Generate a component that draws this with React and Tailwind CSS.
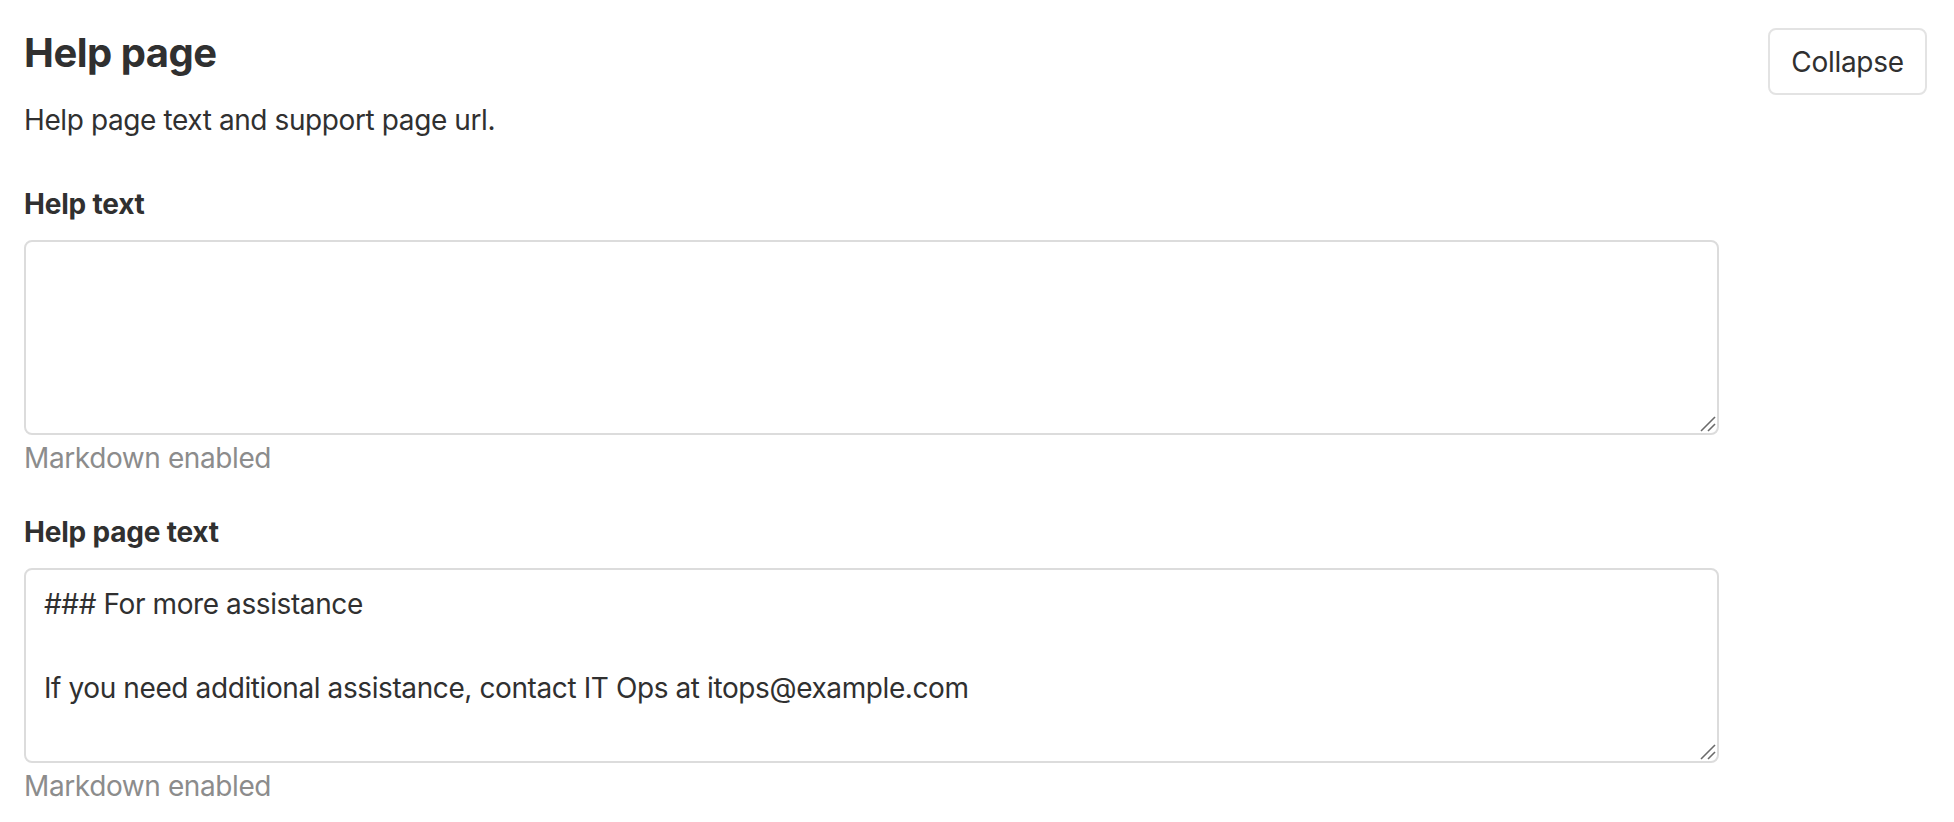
import React from 'react';

const helpPageText = `### For more assistance

If you need additional assistance, contact IT Ops at itops@example.com`;

const Grip = () => (
    <svg className="absolute right-[3px] bottom-[3px] pointer-events-none" width="16" height="16" viewBox="0 0 16 16">
        <line x1="1" y1="15" x2="15" y2="1" stroke="#6b6b6b" strokeWidth="1.6" />
        <line x1="8" y1="15" x2="15" y2="8" stroke="#6b6b6b" strokeWidth="1.6" />
    </svg>
);

const Field = ({ label, value, topGap }) => (
    <div className={topGap}>
        <label className="block text-[28px] leading-[42px] font-bold text-[#303030] tracking-[-0.2px]">{label}</label>
        <div className="relative mt-[15px]">
            <textarea
                defaultValue={value}
                className="block w-full h-[195px] border-2 border-[#dcdcdc] rounded-[8px] px-[18px] pt-[13px] pb-[8px] text-[28px] leading-[42px] tracking-[-0.4px] text-[#303030] bg-white resize-none focus:outline-none"
                style={{ fontFamily: 'inherit' }}
            />
            <Grip />
        </div>
        <p className="mt-[2px] text-[28px] leading-[42px] tracking-[-0.4px] text-[#8c8c8c]">Markdown enabled</p>
    </div>
);

const App = () => {
    return (
        <div
            className="min-h-screen bg-white flex items-start pl-[24px] pr-[27px]"
            style={{ fontFamily: 'Inter, "Noto Sans", sans-serif' }}
        >
            <div className="flex-1 pt-[29px]">
                <h4 className="text-[40px] leading-[48px] font-bold text-[#303030] tracking-[-0.5px]">Help page</h4>
                <p className="mt-[22px] text-[28px] leading-[42px] tracking-[-0.4px] text-[#303030]">
                    Help page text and support page url.
                </p>
                <Field label="Help text" value="" topGap="mt-[42px]" />
                <Field label="Help page text" value={helpPageText} topGap="mt-[32px]" />
            </div>
            <button
                type="button"
                className="ml-[49px] mt-[28px] shrink-0 w-[159px] h-[67px] border-2 border-[#e3e3e3] rounded-[8px] bg-white text-[28px] tracking-[-0.3px] text-[#303030]"
            >
                Collapse
            </button>
        </div>
    );
};

export default App;
